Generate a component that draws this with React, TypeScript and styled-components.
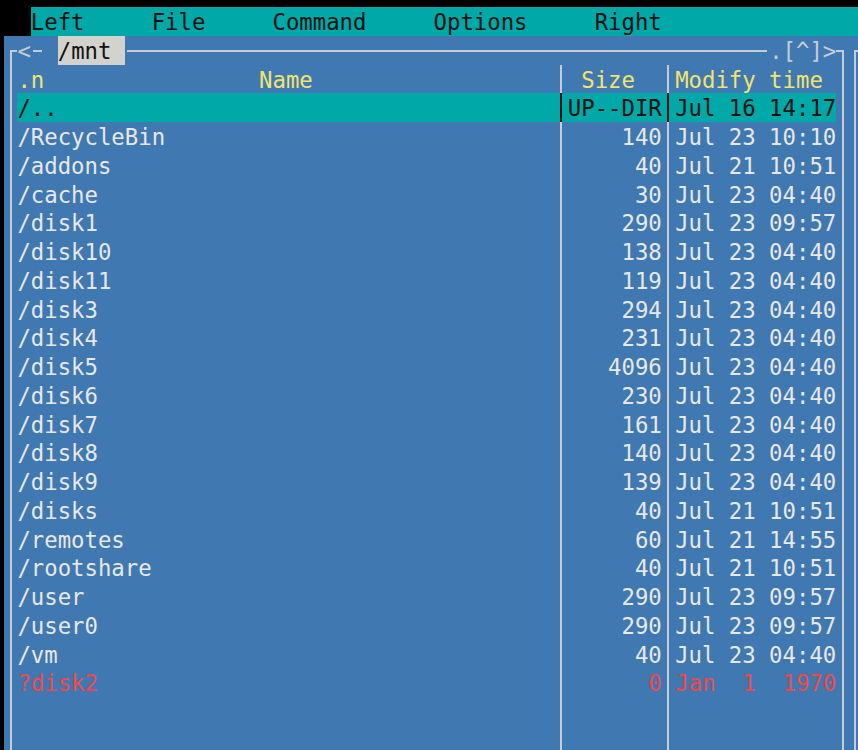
import styled, { createGlobalStyle } from "styled-components";

const ROW = "28.75px";
const BLUE = "#4078b2";
const TEAL = "#00a8a8";
const LINE = "#c6ccd4";
const TEXT = "#e8e8e8";
const YELLOW = "#f2e46a";
const RED = "#f04848";

const GlobalStyle = createGlobalStyle`
  html, body {
    margin: 0;
    padding: 0;
    background: #000;
  }
  * {
    box-sizing: border-box;
  }
`;

const Screen = styled.div`
  width: 858px;
  height: 750px;
  overflow: hidden;
  background: #000;
  padding-top: 7px;
  font-family: "DejaVu Sans Mono", "Liberation Mono", monospace;
  font-size: 22.3px;
  /* a touch taller than the row so glyphs sit where the terminal draws them */
  line-height: calc(${ROW} + 3px);
  white-space: pre;
  display: flex;
  flex-direction: column;
`;

const MenuBar = styled.div`
  display: flex;
  height: ${ROW};
  overflow: hidden;
  margin-left: calc(4px + 2ch);
  background: ${TEAL};
  color: #111;
`;

const MenuItem = styled.span`
  padding-right: 5ch;
`;

const Workspace = styled.div`
  flex: 1;
  display: flex;
  padding-left: 4px;
  min-height: 0;
`;

const Panel = styled.div`
  width: 63ch;
  flex-shrink: 0;
  display: flex;
  flex-direction: column;
  background: ${BLUE};
  color: ${TEXT};
`;

const TitleRow = styled.div`
  display: flex;
  height: ${ROW};
  overflow: hidden;
  color: ${LINE};
`;

const Corner = styled.span<{ $side: "left" | "right" }>`
  align-self: flex-end;
  height: 50%;
  width: calc(0.5ch + 1px);
  border-top: 2px solid ${LINE};
  ${({ $side }) =>
    $side === "left"
      ? `margin-left: calc(0.5ch - 1px); border-left: 2px solid ${LINE};`
      : `margin-right: calc(0.5ch - 1px); border-right: 2px solid ${LINE};`}
`;

const Dash = styled.span<{ $grow?: boolean }>`
  align-self: flex-end;
  height: 50%;
  border-top: 2px solid ${LINE};
  ${({ $grow }) => ($grow ? "flex: 1; margin: 0 2px;" : "width: calc(1ch - 4px); margin: 0 2px;")}
`;

const PathTag = styled.span`
  background: #d3d3cd;
  color: #111;
`;

const Body = styled.div`
  flex: 1;
  display: flex;
  flex-direction: column;
  margin: 0 calc(0.5ch - 1px);
  padding: 0 calc(0.5ch - 1px);
  border-left: 2px solid ${LINE};
  border-right: 2px solid ${LINE};
`;

const Row = styled.div<{ $selected?: boolean; $tone?: string; $fill?: boolean }>`
  display: grid;
  grid-template-columns: 40ch 1ch 7ch 1ch 12ch;
  height: ${({ $fill }) => ($fill ? "auto" : ROW)};
  flex: ${({ $fill }) => ($fill ? 1 : "none")};
  overflow: hidden;
  background: ${({ $selected }) => ($selected ? TEAL : "transparent")};
  color: ${({ $selected, $tone }) => ($selected ? "#111" : $tone || TEXT)};
`;

const Cell = styled.span<{ $align?: "left" | "right" }>`
  overflow: hidden;
  text-align: ${({ $align }) => $align || "left"};
`;

const Sep = styled.span<{ $dark?: boolean }>`
  background: linear-gradient(
    to right,
    transparent calc(50% - 1px),
    ${({ $dark }) => ($dark ? "#111" : LINE)} calc(50% - 1px),
    ${({ $dark }) => ($dark ? "#111" : LINE)} calc(50% + 1px),
    transparent calc(50% + 1px)
  );
`;

const NextPanel = styled.div`
  flex: 1;
  background: ${BLUE};
  padding-left: 4px;
  display: flex;
  flex-direction: column;
`;

const NextFrame = styled.div`
  flex: 1;
  margin-top: 14px;
  border-left: 2px solid ${LINE};
  border-top: 2px solid ${LINE};
`;

const menu = ["Left", "File", "Command", "Options", "Right"];

type Entry = { name: string; size: string; time: string; broken?: boolean };

const entries: Entry[] = [
  { name: "/..", size: "UP--DIR", time: "Jul 16 14:17" },
  { name: "/RecycleBin", size: "140", time: "Jul 23 10:10" },
  { name: "/addons", size: "40", time: "Jul 21 10:51" },
  { name: "/cache", size: "30", time: "Jul 23 04:40" },
  { name: "/disk1", size: "290", time: "Jul 23 09:57" },
  { name: "/disk10", size: "138", time: "Jul 23 04:40" },
  { name: "/disk11", size: "119", time: "Jul 23 04:40" },
  { name: "/disk3", size: "294", time: "Jul 23 04:40" },
  { name: "/disk4", size: "231", time: "Jul 23 04:40" },
  { name: "/disk5", size: "4096", time: "Jul 23 04:40" },
  { name: "/disk6", size: "230", time: "Jul 23 04:40" },
  { name: "/disk7", size: "161", time: "Jul 23 04:40" },
  { name: "/disk8", size: "140", time: "Jul 23 04:40" },
  { name: "/disk9", size: "139", time: "Jul 23 04:40" },
  { name: "/disks", size: "40", time: "Jul 21 10:51" },
  { name: "/remotes", size: "60", time: "Jul 21 14:55" },
  { name: "/rootshare", size: "40", time: "Jul 21 10:51" },
  { name: "/user", size: "290", time: "Jul 23 09:57" },
  { name: "/user0", size: "290", time: "Jul 23 09:57" },
  { name: "/vm", size: "40", time: "Jul 23 04:40" },
  { name: "?disk2", size: "0", time: "Jan  1  1970", broken: true },
];

const App = () => {
  return (
    <Screen>
      <GlobalStyle />
      <MenuBar>
        {menu.map((item) => (
          <MenuItem key={item}>{item}</MenuItem>
        ))}
      </MenuBar>
      <Workspace>
        <Panel>
          <TitleRow>
            <Corner $side="left" />
            <span>{"<"}</span>
            <Dash />
            <span> </span>
            <PathTag>{"/mnt "}</PathTag>
            <Dash $grow />
            <span>.[^]&gt;</span>
            <Corner $side="right" />
          </TitleRow>
          <Body>
            <Row $tone={YELLOW}>
              <Cell>{".n" + " ".repeat(16) + "Name"}</Cell>
              <Sep />
              <Cell>{" Size"}</Cell>
              <Sep />
              <Cell>Modify time</Cell>
            </Row>
            {entries.map((entry, i) => (
              <Row key={entry.name} $selected={i === 0} $tone={entry.broken ? RED : undefined}>
                <Cell>{entry.name}</Cell>
                <Sep $dark={i === 0} />
                <Cell $align="right">{entry.size}</Cell>
                <Sep $dark={i === 0} />
                <Cell>{entry.time}</Cell>
              </Row>
            ))}
            <Row $fill>
              <Cell />
              <Sep />
              <Cell />
              <Sep />
              <Cell />
            </Row>
          </Body>
        </Panel>
        <NextPanel>
          <NextFrame />
        </NextPanel>
      </Workspace>
    </Screen>
  );
};

export default App;
